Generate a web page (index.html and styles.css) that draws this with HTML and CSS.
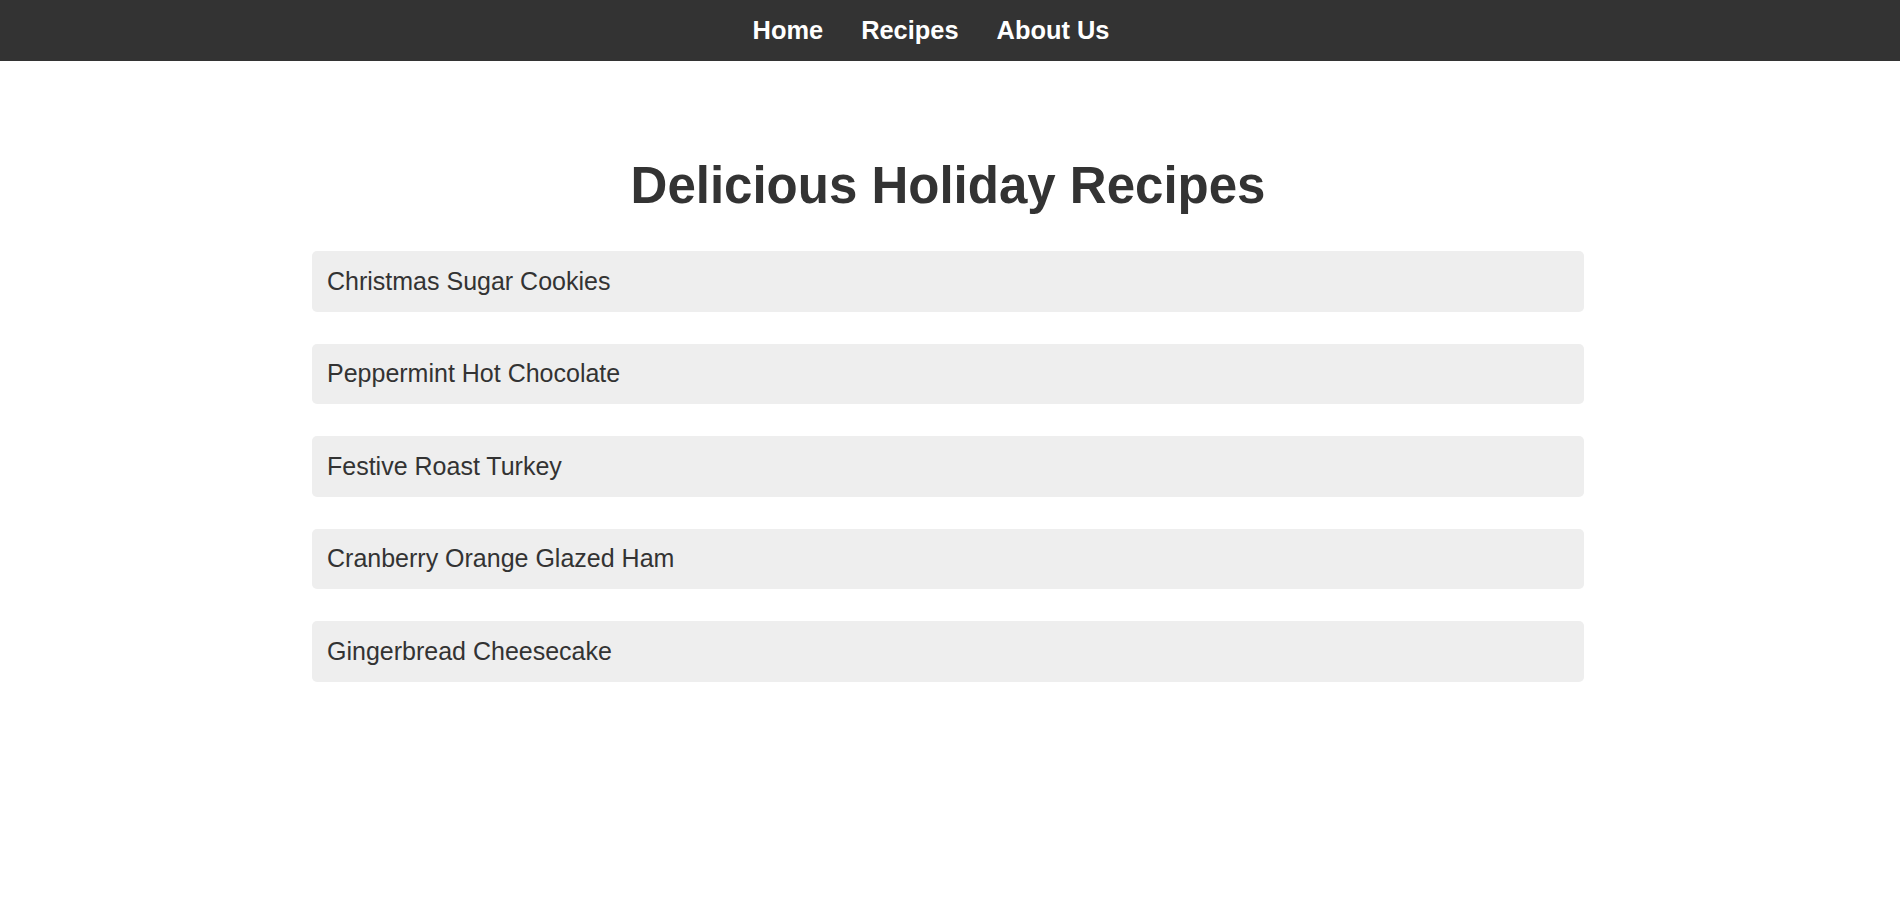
FILE: index.html
```html
<!DOCTYPE html>
<html lang="en">
<head>
<meta charset="utf-8">
<title>Delicious Holiday Recipes</title>
<link rel="stylesheet" href="styles.css">
</head>
<body>
<nav class="topnav">
  <a class="nav-link" href="#">Home</a>
  <a class="nav-link" href="#">Recipes</a>
  <a class="nav-link" href="#">About Us</a>
</nav>
<main class="content">
  <h1 class="title">Delicious Holiday Recipes</h1>
  <ul class="recipe-list">
    <li class="recipe">Christmas Sugar Cookies</li>
    <li class="recipe">Peppermint Hot Chocolate</li>
    <li class="recipe">Festive Roast Turkey</li>
    <li class="recipe">Cranberry Orange Glazed Ham</li>
    <li class="recipe">Gingerbread Cheesecake</li>
  </ul>
</main>
</body>
</html>
```
FILE: styles.css
```css
html, body {
  margin: 0;
  padding: 0;
  background: #ffffff;
  font-family: "Liberation Sans", Arial, sans-serif;
  color: #333333;
}

.topnav {
  height: 61px;
  background: #333333;
  display: flex;
  justify-content: center;
  align-items: center;
}

.nav-link {
  color: #ffffff;
  text-decoration: none;
  font-weight: bold;
  font-size: 25.4px;
  margin-right: 38px;
}

.content {
  width: 1272px;
  margin: 0 auto;
  padding-right: 4px;
}

.title {
  margin: 96px 0 36px;
  font-size: 51px;
  line-height: 58px;
  text-align: center;
  color: #333333;
}

.recipe-list {
  list-style: none;
  margin: 0;
  padding: 0;
  display: flex;
  flex-direction: column;
  gap: 32px;
}

.recipe {
  height: 60.5px;
  display: flex;
  align-items: center;
  padding-left: 15px;
  background: #eeeeee;
  border-radius: 5px;
  font-size: 25px;
  color: #333333;
}
```
